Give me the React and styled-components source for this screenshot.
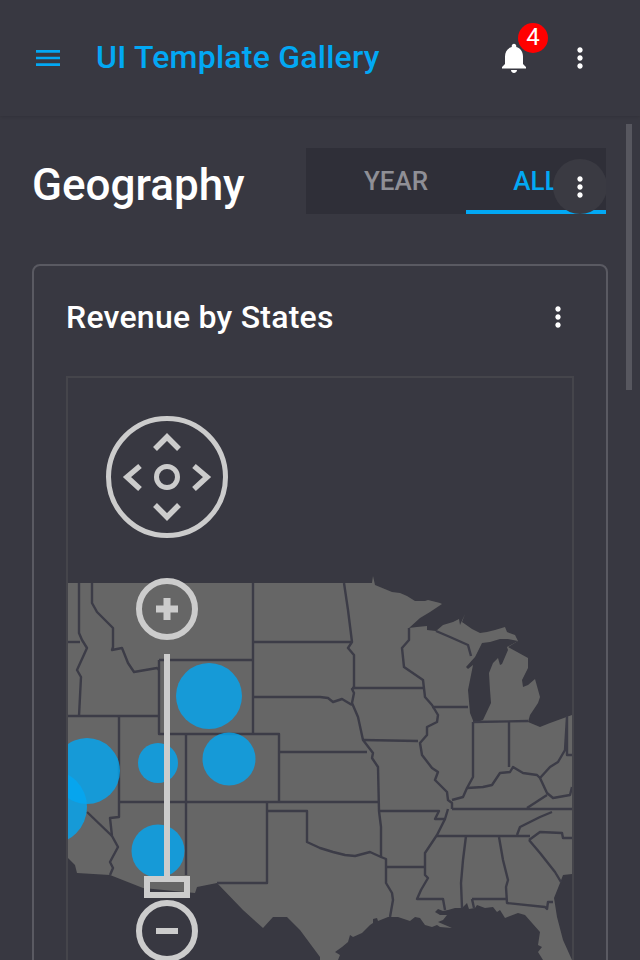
import React from "react";
import styled, { createGlobalStyle } from "styled-components";

const Global = createGlobalStyle`
  html, body { margin: 0; padding: 0; background: #383841; }
  * { box-sizing: border-box; }
`;

const Page = styled.div`
  position: relative;
  width: 640px;
  height: 960px;
  overflow: hidden;
  background: #383841;
  font-family: Roboto, "Liberation Sans", sans-serif;
`;

const Header = styled.header`
  display: flex;
  align-items: center;
  height: 116px;
  padding: 0 44px 0 32px;
  box-shadow: 0 1px 3px rgba(0, 0, 0, 0.12);
`;

const IconBtn = styled.span`
  display: flex;
  flex: none;
  color: ${(p) => p.$color || "#fff"};
  margin-left: ${(p) => p.$ml || 0}px;
`;

const Brand = styled.h1`
  flex: 1;
  margin: 0 0 2px 32px;
  font-size: 32px;
  font-weight: 500;
  letter-spacing: 0.0075em;
  line-height: 36px;
  color: #02a8f4;
`;

const BellWrap = styled.span`
  position: relative;
  display: flex;
  color: #fff;
`;

const Badge = styled.span`
  position: absolute;
  top: -17px;
  right: -16px;
  width: 30px;
  height: 30px;
  border-radius: 50%;
  background: #ff0000;
  color: #fff;
  font-size: 24px;
  line-height: 29px;
  text-align: center;
`;

const Main = styled.main`
  padding: 32px 32px 0;
`;

const TitleRow = styled.div`
  display: flex;
  align-items: center;
  justify-content: space-between;
  height: 66px;
  margin-bottom: 50px;
`;

const PageTitle = styled.h2`
  margin: 8px 0 0;
  font-size: 44px;
  font-weight: 500;
  line-height: 56px;
  color: #fff;
`;

const Tabs = styled.div`
  position: relative;
  display: flex;
  width: 300px;
  height: 66px;
  margin-right: 2px;
  padding-left: 20px;
  background: #2f2f38;
  overflow: hidden;
`;

const Tab = styled.div`
  flex: none;
  width: 140px;
  height: 66px;
  padding-top: 18px;
  font-size: 26px;
  font-weight: 500;
  line-height: 30px;
  text-align: center;
  color: ${(p) => (p.$active ? "#02a8f4" : "#8f8f96")};
  border-bottom: 4px solid ${(p) => (p.$active ? "#02a8f4" : "transparent")};
`;

const ScrollBtn = styled.div`
  position: absolute;
  right: -1px;
  top: 11px;
  width: 54px;
  height: 55px;
  display: flex;
  align-items: center;
  justify-content: center;
  border-radius: 50%;
  background: #3a3a42;
  color: #fff;
`;

const Card = styled.section`
  width: 576px;
  height: 760px;
  padding: 32px;
  border: 2px solid #5a5a62;
  border-radius: 8px;
`;

const CardHead = styled.div`
  display: flex;
  align-items: center;
  justify-content: space-between;
  height: 38px;
  margin-bottom: 40px;
`;

const CardTitle = styled.h3`
  margin: 0;
  font-size: 32px;
  font-weight: 500;
  letter-spacing: 0.0075em;
  line-height: 38px;
  color: #fff;
`;

const CardMenu = styled.span`
  display: flex;
  color: #fff;
`;

const MapFrame = styled.div`
  width: 508px;
  height: 600px;
  border: 2px solid #45454b;
  overflow: hidden;
`;

const MapSvg = styled.svg`
  display: block;
  width: 504px;
  height: 596px;
`;

const Scrollbar = styled.div`
  position: absolute;
  left: 626px;
  top: 124px;
  width: 6px;
  height: 266px;
  background: #57575f;
`;

const Dots = ({ size = 32 }) => (
  <svg width={size} height={size} viewBox="0 0 24 24" fill="currentColor">
    <path d="M12 8c1.1 0 2-.9 2-2s-.9-2-2-2-2 .9-2 2 .9 2 2 2zm0 2c-1.1 0-2 .9-2 2s.9 2 2 2 2-.9 2-2-.9-2-2-2zm0 6c-1.1 0-2 .9-2 2s.9 2 2 2 2-.9 2-2-.9-2-2-2z" />
  </svg>
);

const land =
  "68,583 372,583 373,576 375,585 392,592 400,593 407,596 415,601 425,601 428,600 440,603 442,604 430,612 420,618 409,628 417,627 427,626 427,630 436,631 443,625 453,622 459,619 460,625 465,614 462,622 472,629 480,633 487,632 495,630 505,627 507,632 515,635 518,641 508,647 528,658 528,668 522,680 523,687 528,685 535,679 540,697 538,703 530,715 528,722 540,727 550,723 572,715 572,874 563,875 560,883 554,898 557,917 563,940 572,960 543,960 538,952 542,947 538,945 540,932 525,915 518,913 505,918 500,910 497,912 493,907 485,908 477,905 475,908 469,909 467,903 462,908 455,908 448,910 443,911 438,909 435,912 440,915 447,915 443,920 438,922 452,928 440,927 437,925 432,927 425,925 420,918 415,917 410,921 398,917 388,917 378,921 377,918 373,919 373,923 370,925 362,933 353,937 350,935 348,942 342,947 335,952 340,955 338,960 320,960 320,957 300,930 287,917 273,917 263,928 243,910 217,883 197,887 195,893 143,888 110,875 77,873 75,865 68,858";

const lakeMichigan =
  "482,643 475,657 466,667 468,669 473,665 468,690 470,713 474,723 483,720 491,703 490,690 489,673 493,663 498,658 500,665 502,664 508,650 507,647 518,641 508,639 500,639 490,642";

const borders = [
  "79,583 79,633 82,640 87,648 77,670 81,677 79,716",
  "68,642 80,642",
  "92,583 92,603 97,612 113,628 113,647 112,650 122,648 128,663 134,672 157,668 159,670",
  "159,660 253,660",
  "159,660 159,734 279,734 279,802",
  "253,583 253,734",
  "68,716 159,716",
  "119,716 119,817 110,818 112,836 118,847 110,862 113,868 110,875",
  "87,812 112,836",
  "119,802 378,802",
  "267,802 267,883 217,883",
  "267,811 307,811 307,842 320,848 333,852 345,855 355,856 370,852 381,857 386,859 386,883 392,893 393,900 390,917",
  "186,734 186,875",
  "279,752 367,752",
  "253,642 352,642",
  "253,697 320,697 328,698 333,702 342,699 352,705",
  "344,583 348,610 352,642 348,648 354,655 354,688 352,689 354,693 352,703 358,717 363,740 373,753 372,758 378,767 379,811 381,827 381,857",
  "352,688 423,688",
  "363,740 418,741",
  "409,628 409,640 402,648 404,667 423,680 425,697 432,705 438,715 437,722 427,727 427,735 420,743 422,755 432,768 438,772 435,780 447,792 448,800 452,803 452,809",
  "432,707 468,707",
  "436,631 450,637 468,645 471,656",
  "473,722 473,777 467,788 463,797 452,800",
  "509,721 509,767",
  "473,722 528,721",
  "467,788 483,787 492,785 500,773 510,772 513,767 523,773 537,775 540,778 550,767 558,762 565,750 567,717 567,755 572,755",
  "540,778 547,793 553,798 570,795 572,787",
  "452,809 572,809",
  "527,808 547,795",
  "379,811 439,811 435,819 445,819 448,809",
  "445,819 437,835 425,853 425,875 428,878 421,890 417,899 443,899 445,910",
  "437,836 530,836",
  "517,835 520,827 540,817 552,812",
  "466,836 463,860 461,883 462,908",
  "499,837 503,860 508,880 506,887 507,903 545,907 547,909 548,902 553,902",
  "472,899 507,899",
  "472,899 474,908",
  "529,840 540,853 555,872 561,882",
  "529,840 540,832 562,833 563,838 572,838",
  "387,867 425,867",
];

const bubbles = [
  [50, 807, 37],
  [87, 771, 33],
  [209, 696, 33],
  [158, 763, 20],
  [229, 759, 26.5],
  [158, 851, 26.5],
];

const USMap = () => (
  <MapSvg viewBox="68 378 504 596">
    <polygon points={land} fill="#666666" />
    <polygon points={lakeMichigan} fill="#383841" />
    <g fill="none" stroke="#3c3c47" strokeWidth="2.4" strokeLinejoin="round">
      {borders.map((b) => (
        <polyline key={b} points={b} />
      ))}
    </g>
    <g fill="#02a8f4" fillOpacity="0.8">
      {bubbles.map(([x, y, r]) => (
        <circle key={x + "-" + y} cx={x} cy={y} r={r} />
      ))}
    </g>
    <g fill="none" stroke="#cccccc">
      <circle cx="167" cy="477" r="58.5" strokeWidth="5" />
      <circle cx="167" cy="477" r="10.5" strokeWidth="5" />
      <g strokeWidth="5.5">
        <polyline points="155,449 167,437 179,449" />
        <polyline points="155,505 167,517 179,505" />
        <polyline points="140,466 127,477 140,489" />
        <polyline points="194,466 207,477 194,489" />
      </g>
      <circle cx="167" cy="609" r="28" strokeWidth="6" />
      <path d="M156 609h22M167 598v22" strokeWidth="7" />
      <path d="M167 654v222" strokeWidth="6" />
      <rect x="147" y="879" width="40" height="16" strokeWidth="6" />
      <circle cx="167" cy="931" r="28" strokeWidth="6" />
      <path d="M156 931h22" strokeWidth="6" />
    </g>
  </MapSvg>
);

export default function App() {
  return (
    <Page>
      <Global />
      <Header>
        <IconBtn $color="#02a8f4">
          <svg width="32" height="32" viewBox="0 0 24 24" fill="currentColor">
            <path d="M3 18h18v-2H3v2zm0-5h18v-2H3v2zm0-7v2h18V6H3z" />
          </svg>
        </IconBtn>
        <Brand>UI Template Gallery</Brand>
        <BellWrap>
          <svg width="36" height="36" viewBox="0 0 24 24" fill="currentColor">
            <path d="M12 22c1.1 0 2-.9 2-2h-4c0 1.1.89 2 2 2zm6-6v-5c0-3.07-1.64-5.64-4.5-6.32V4c0-.83-.67-1.5-1.5-1.5s-1.5.67-1.5 1.5v.68C7.63 5.36 6 7.92 6 11v5l-2 2v1h16v-1l-2-2z" />
          </svg>
          <Badge>4</Badge>
        </BellWrap>
        <IconBtn $ml={32}>
          <Dots />
        </IconBtn>
      </Header>
      <Main>
        <TitleRow>
          <PageTitle>Geography</PageTitle>
          <Tabs>
            <Tab>YEAR</Tab>
            <Tab $active>ALL</Tab>
            <ScrollBtn>
              <Dots />
            </ScrollBtn>
          </Tabs>
        </TitleRow>
        <Card>
          <CardHead>
            <CardTitle>Revenue by States</CardTitle>
            <CardMenu>
              <Dots />
            </CardMenu>
          </CardHead>
          <MapFrame>
            <USMap />
          </MapFrame>
        </Card>
      </Main>
      <Scrollbar />
    </Page>
  );
}
